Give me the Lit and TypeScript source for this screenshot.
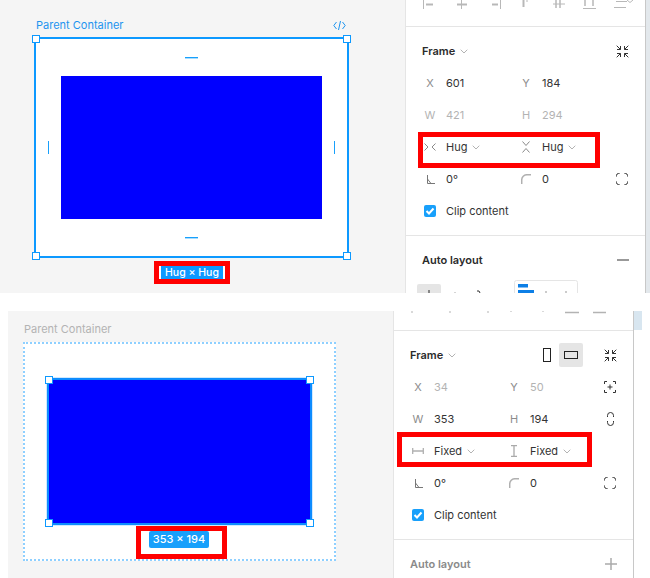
import { LitElement, html, css, svg } from "lit";
import { customElement } from "lit/decorators.js";

const chev = html`<svg class="chev" width="8" height="5" viewBox="0 0 8 5"><path d="M.7.7L4 4 7.300.7" fill="none" stroke="#b3b3b3"/></svg>`;
const ic = (w: number, h: number, body: unknown) =>
  html`<svg class="ic" width=${w} height=${h} viewBox="0 0 ${w} ${h}" fill="none" stroke="#333">${body}</svg>`;

const shrink = ic(13, 13, svg`<path d="M.7.7l3.800 3.800M12.300.7L8.500 4.500M.7 12.300l3.800-3.800M12.300 12.300L8.500 8.500M1 4.500h3.500V1M12 4.500H8.500V1M1 8.500h3.500V12M12 8.500H8.500V12"/>`);
const corners = ic(12, 12, svg`<path d="M.5 3.500v-1a2 2 0 0 1 2-2h1M8.500.5h1a2 2 0 0 1 2 2v1M11.500 8.500v1a2 2 0 0 1-2 2h-1M3.500 11.500h-1a2 2 0 0 1-2-2v-1"/>`);
const angle = ic(9, 9, svg`<path d="M1.500 0v8.500H9M1.500 4l3.500 4.500" stroke="#777"/>`);
const radius = ic(10, 10, svg`<path d="M.7 10V6A5.300 5.300 0 0 1 6 .7H10" stroke="#b0b0b0" stroke-width="1.500"/>`);
const hugW = ic(12, 8, svg`<path d="M.5.500L4 4 .5 7.500M11.500.500L8 4l3.500 3.500" stroke="#8a8a8a"/>`);
const hugH = ic(8, 12, svg`<path d="M.5.500L4 4.500 7.500.500M.5 11.500L4 7.500l3.500 4" stroke="#8a8a8a"/>`);
const fixedW = ic(12, 6, svg`<path d="M.7 0v6M11.300 0v6M1 3h10" stroke="#b0b0b0" stroke-width="1.300"/>`);
const fixedH = ic(6, 12, svg`<path d="M0 .7h6M0 11.300h6M3 1v10" stroke="#aaa" stroke-width="1.300"/>`);
const target = ic(12, 12, svg`<path d="M.5 3V.5H3M9 .5h2.500V3M11.500 9v2.500H9M3 11.500H.5V9M6 3.500v5M3.500 6h5"/>`);
const link = ic(7, 14, svg`<path d="M.5 5V3.500a3 3 0 0 1 6 0V5M.5 9v1.500a3 3 0 0 0 6 0V9"/>`);
const check = html`<span class="box"><svg width="12" height="12" viewBox="0 0 12 12"><path d="M2.500 6l2.500 2.500 4.500-5" fill="none" stroke="#fff" stroke-width="2"/></svg></span>`;

const toolTop = html`<svg class="tools" width="239" height="26" viewBox="0 0 239 26" fill="none" stroke="#b8b8b8">
  <path d="M17.500 0v9"/><path d="M20 4.500h7" stroke-width="2"/>
  <path d="M55.500 0v9"/><path d="M51 4.500h10" stroke-width="2"/>
  <path d="M94.500 0v9"/><path d="M86 4.500h6" stroke-width="2"/>
  <path d="M117.500 0v7" stroke-width="2"/><path d="M121 0v2"/>
  <path d="M150 0v8M154 0v8" stroke-width="1.500"/><path d="M147 4h12"/>
  <path d="M179 0v6M187 0v6" stroke-width="1.500"/><path d="M177 8.500h13"/>
  <path d="M210 1.500h11M208 7.500h12"/><path d="M221 0l3 2.500 3-2.500"/></svg>`;
const toolBottom = html`<svg class="tools" width="239" height="19" viewBox="0 0 239 19" fill="none" stroke="#b3b3b3">
  <path d="M18 0v2M56 0v2M94 0v2M117 0v1M149 0v1" /><path d="M171 1.500h14M199 1.500h13" stroke-width="1.500"/></svg>`;
const alignRow = html`<svg class="tools" width="239" height="17" viewBox="0 0 239 17" fill="none">
  <rect x="11" y="8" width="24" height="24" rx="2" fill="#e5e5e5"/>
  <path d="M23 14v3" stroke="#666" stroke-width="1.500"/>
  <path d="M49 16v1" stroke="#aaa"/><path d="M71 15h2l1 2" stroke="#333"/>
  <rect x="108.500" y="4.500" width="63" height="30" rx="2" stroke="#e5e5e5"/>
  <rect x="112" y="8" width="10" height="3.500" fill="#0d7fe6"/>
  <rect x="112" y="14" width="16" height="4" fill="#0d7fe6"/>
  <path d="M140 15v2M160 15v2" stroke="#bbb" stroke-width="1.500"/></svg>`;

interface Row {
  a: unknown; av: string; b: unknown; bv: string; c?: unknown; muted?: "labels" | "values"; dd?: boolean;
}

const panelRows = (rows: Row[]) => rows.map(
  (r) => html`<div class="row ${r.muted ?? ""}">
    <span class="lab">${r.a}</span><span class="val">${r.av}${r.dd ? chev : ""}</span>
    <span class="lab">${r.b}</span><span class="val">${r.bv}${r.dd ? chev : ""}</span>
    <span class="end">${r.c ?? ""}</span>
  </div>`
);

@customElement("app-root")
export class AppRoot extends LitElement {
  static styles = css`
    :host { display: block; width: 650px; height: 578px; overflow: hidden; background: #fff;
      font-family: Inter, "Liberation Sans", sans-serif; font-size: 11px; color: #333; }
    .shot { display: flex; overflow: hidden; }
    .shot.one { height: 293px; }
    .shot.two { height: 267px; margin-top: 18px; padding-left: 8px; }
    .canvas { flex: none; background: #f5f5f5; box-sizing: border-box; }
    .one .canvas { width: 405px; padding: 18px 0 0 34px; }
    .two .canvas { width: 385px; padding: 11px 0 0 15px; }
    .head { display: flex; justify-content: space-between; align-items: center; height: 14px; line-height: 14px; }
    .one .head { width: 315px; padding: 0 2px; box-sizing: border-box; color: #1d94ef; margin-bottom: 5px; }
    .one .head svg { margin-right: 1px; }
    .two .head { color: #b3b3b3; margin-bottom: 6px; padding-left: 1px; }
    .frame { position: relative; background: #fff; box-sizing: border-box; }
    .frame.hug { width: 315px; height: 221px; border: 2px solid #0d99ff; padding: 37px 0 0 25px; }
    .frame.ghost { width: 313px; height: 219px; border: 2px dotted #8fd0ff; padding: 34px 0 0 22px; }
    .fill { position: relative; background: #00f; box-sizing: border-box; }
    .hug .fill { width: 261px; height: 143px; }
    .ghost .fill { width: 265px; height: 147px; border: 2px solid #0d8cff; outline: 1px solid #cfe9ff; }
    .h { position: absolute; width: 8px; height: 8px; box-sizing: border-box; background: #fff; border: 1.500px solid #0d99ff; }
    .tl { left: -4px; top: -4px; } .tr { right: -4px; top: -4px; }
    .bl { left: -4px; bottom: -4px; } .br { right: -4px; bottom: -4px; }
    .tick { position: absolute; background: #18a0fb; }
    .tick.t, .tick.b { width: 13px; height: 1px; left: 149px; box-shadow: 0 1px 0 #a8dcff; }
    .tick.t { top: 18px; } .tick.b { bottom: 18px; }
    .tick.l, .tick.r { width: 1px; height: 13px; top: 102px; }
    .tick.l { left: 12px; } .tick.r { right: 12px; }
    .mark { box-sizing: border-box; border: 5px solid #f00; background: #fff; display: flex; font-weight: 500; color: #fff; }
    .one .mark { width: 76px; height: 23px; margin: 3px 0 0 120px; justify-content: center; }
    .one .mark span { width: 66px; height: 13px; line-height: 13px; text-align: center; background: #0d99ff; border-left: 1px solid #fff; border-right: 1px solid #fff; box-sizing: border-box; margin: 0 1px; font-size: 10.500px; }
    .two .mark { width: 91px; height: 33px; margin: 1px 0 0 89px; padding-left: 8px; }
    .two .mark span { width: 60px; height: 17px; line-height: 17px; text-align: center; background: #18a0fb; border-radius: 2px; }
    .panel { flex: none; box-sizing: border-box; width: 241px; border-left: 1px solid #e5e5e5; border-right: 1px solid #c8c8c8; background: #fff; position: relative; }
    .edge { flex: 1; }
    .one .edge { background: #e3e8ec; }
    .two .edge { flex: none; width: 8px; height: 19px; background: #d8e6f0; }
    .tools { display: block; }
    .section { border-top: 1px solid #e5e5e5; padding: 8px 0; }
    .title { display: flex; align-items: center; height: 32px; padding: 0 16px; font-weight: 600; color: #2b2b2b; }
    .title .chev { margin-left: 5px; }
    .title .push { margin-left: auto; display: flex; align-items: center; }
    .muted-title { color: #8a8a8a; }
    .row { display: grid; grid-template-columns: 24px 72px 24px 72px 16px; height: 32px; padding-left: 16px; align-items: center; }
    .lab, .end { display: flex; align-items: center; justify-content: center; }
    .lab { width: 16px; color: #8c8c8c; }
    .val { white-space: nowrap; display: flex; align-items: center; }
    .val .chev { margin-left: 5px; }
    .row.values .val, .row.labels .lab, .row.labels .val { color: #b3b3b3; }
    .check { display: flex; align-items: center; gap: 10px; height: 32px; padding-left: 18px; }
    .box { width: 12px; height: 12px; border-radius: 2px; background: #18a0fb; display: flex; }
    .ann { position: absolute; box-sizing: border-box; border: 5px solid #f00; z-index: 2; }
    .ann.a { left: 12px; top: 132px; width: 182px; height: 36px; }
    .ann.b { left: 3px; top: 121px; width: 195px; height: 35px; }
    .orient { display: flex; align-items: center; gap: 8px; }
    .o1 { width: 8px; height: 14px; box-sizing: border-box; border: 1px solid #222; display: block; }
    .on { width: 24px; height: 24px; background: #e5e5e5; border-radius: 2px; display: flex; align-items: center; justify-content: center; }
    .o2 { width: 14px; height: 8px; box-sizing: border-box; border: 1px solid #222; display: block; }
    .gap { margin-left: 21px; display: flex; }
  `;

  render() {
    return html`
      <div class="shot one">
        <div class="canvas">
          <div class="head">
            <span>Parent Container</span>
            <svg width="13" height="9" viewBox="0 0 13 9" fill="none" stroke="#1d94ef"><path d="M3.500 1L.8 4.500 3.500 8M9.500 1l2.700 3.500L9.500 8M7.500 0L5.500 9"/></svg>
          </div>
          <div class="frame hug">
            <div class="fill"></div>
            <i class="tick t"></i><i class="tick b"></i><i class="tick l"></i><i class="tick r"></i>
            <i class="h tl"></i><i class="h tr"></i><i class="h bl"></i><i class="h br"></i>
          </div>
          <div class="mark"><span>Hug × Hug</span></div>
        </div>
        <div class="panel">
          ${toolTop}
          <div class="section">
            <div class="title">Frame ${chev}<span class="push">${shrink}</span></div>
            ${panelRows([
              { a: "X", av: "601", b: "Y", bv: "184" },
              { a: "W", av: "421", b: "H", bv: "294", muted: "labels" },
              { a: hugW, av: "Hug", b: hugH, bv: "Hug", dd: true },
              { a: angle, av: "0°", b: radius, bv: "0", c: corners },
            ])}
            <div class="check">${check}<span>Clip content</span></div>
          </div>
          <div class="section">
            <div class="title">Auto layout<span class="push"><svg width="12" height="2" viewBox="0 0 12 2"><path d="M0 1h12" stroke="#777" stroke-width="1.500"/></svg></span></div>
            ${alignRow}
          </div>
          <div class="ann a"></div>
        </div>
        <div class="edge"></div>
      </div>
      <div class="shot two">
        <div class="canvas">
          <div class="head"><span>Parent Container</span></div>
          <div class="frame ghost">
            <div class="fill">
              <i class="h tl"></i><i class="h tr"></i><i class="h bl"></i><i class="h br"></i>
            </div>
            <div class="mark"><span>353 × 194</span></div>
          </div>
        </div>
        <div class="panel">
          ${toolBottom}
          <div class="section">
            <div class="title">Frame ${chev}
              <span class="push"><span class="orient"><i class="o1"></i><span class="on"><i class="o2"></i></span></span><span class="gap">${shrink}</span></span>
            </div>
            ${panelRows([
              { a: "X", av: "34", b: "Y", bv: "50", c: target, muted: "values" },
              { a: "W", av: "353", b: "H", bv: "194", c: link },
              { a: fixedW, av: "Fixed", b: fixedH, bv: "Fixed", dd: true },
              { a: angle, av: "0°", b: radius, bv: "0", c: corners },
            ])}
            <div class="check">${check}<span>Clip content</span></div>
          </div>
          <div class="section">
            <div class="title muted-title">Auto layout<span class="push"><svg width="12" height="12" viewBox="0 0 12 12"><path d="M6 0v12M0 6h12" stroke="#aaa" stroke-width="1.500"/></svg></span></div>
          </div>
          <div class="ann b"></div>
        </div>
        <div class="edge"></div>
      </div>
    `;
  }
}
